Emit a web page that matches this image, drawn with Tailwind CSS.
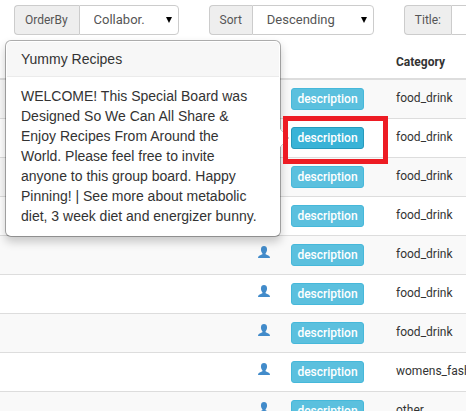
<!DOCTYPE html>
<html lang="en">

<head>
  <meta charset="UTF-8" />
  <meta name="viewport" content="width=device-width, initial-scale=1" />
  <title>Boards</title>
  <script src="https://cdn.jsdelivr.net/npm/@tailwindcss/browser@4"></script>
</head>

<body class="bg-white text-[#333] text-xs font-[Roboto,sans-serif]">

  <div class="relative h-screen overflow-hidden">

    <!-- Filters -->
    <form class="flex gap-[30px] pt-[5px] pl-3.5 text-[#555]">
      <div class="flex h-[30px] shrink-0">
        <label for="order" class="flex items-center pl-2.5 pr-[11px] bg-[#eee] border border-r-0 border-[#ccc] rounded-l">OrderBy</label>
        <div class="relative">
          <select id="order" class="appearance-none w-[100px] h-full pl-3.5 bg-white border border-[#ccc] rounded-r text-[13px]">
            <option>Collabor.</option>
          </select>
          <svg class="absolute right-[7px] top-3 w-[6px] h-[6px] pointer-events-none" viewBox="0 0 6 6"><path d="M0 0h6L3 6z" fill="#000" /></svg>
        </div>
      </div>
      <div class="flex h-[30px] shrink-0">
        <label for="sort" class="flex items-center px-2.5 bg-[#eee] border border-r-0 border-[#ccc] rounded-l">Sort</label>
        <div class="relative">
          <select id="sort" class="appearance-none w-[122px] h-full pl-3.5 bg-white border border-[#ccc] rounded-r text-[13px]">
            <option>Descending</option>
          </select>
          <svg class="absolute right-[7px] top-3 w-[6px] h-[6px] pointer-events-none" viewBox="0 0 6 6"><path d="M0 0h6L3 6z" fill="#000" /></svg>
        </div>
      </div>
      <div class="flex h-[30px] shrink-0">
        <label for="title" class="flex items-center px-2.5 bg-[#eee] border border-r-0 border-[#ccc] rounded-l">Title:</label>
        <input id="title" type="text" class="w-32 px-2.5 bg-white border border-[#ccc] rounded-r" />
      </div>
    </form>

    <!-- Boards -->
    <table class="w-full mt-[7px] table-fixed border-separate border-spacing-0 leading-5 whitespace-nowrap">
      <colgroup>
        <col />
        <col class="w-[33px]" />
        <col class="w-[105px]" />
        <col class="w-[78px]" />
      </colgroup>
      <thead>
        <tr>
          <th class="border-b-2 border-[#ddd]"></th>
          <th class="border-b-2 border-[#ddd]"></th>
          <th class="border-b-2 border-[#ddd]"></th>
          <th class="px-2 pt-2.5 pb-1.5 border-b-2 border-[#ddd] text-left font-bold">Category</th>
        </tr>
      </thead>
      <tbody id="boards"></tbody>
    </table>

    <!-- Popover -->
    <div class="absolute top-10 left-[5px] w-[276px] p-px bg-white border border-black/30 bg-clip-padding rounded-md shadow-[0_5px_10px_rgba(0,0,0,0.2)] font-[Liberation_Sans,Arial,sans-serif] text-sm">
      <h3 class="px-3.5 py-2 bg-[#f7f7f7] border-b border-[#ebebeb] rounded-t leading-[18px]">Yummy Recipes</h3>
      <p class="px-3.5 py-[9px] leading-5 whitespace-nowrap">
        WELCOME! This Special Board was<br>
        Designed So We Can All Share &amp;<br>
        Enjoy Recipes From Around the<br>
        World. Please feel free to invite<br>
        anyone to this group board. Happy<br>
        Pinning! | See more about metabolic<br>
        diet, 3 week diet and energizer bunny.
      </p>
      <svg class="absolute left-full top-[87px] w-[10px] h-[20px]" viewBox="0 0 10 20"><path d="M-1 0L9 10L-1 20" fill="#fff" stroke="#ccc" /></svg>
    </div>

    <!-- Highlight -->
    <div class="absolute top-[116px] left-[283px] w-[105px] h-12 border-5 border-[#ed1c24] pointer-events-none"></div>
  </div>

  <script>
    const categories = ['food_drink', 'food_drink', 'food_drink', 'food_drink', 'food_drink', 'food_drink', 'food_drink', 'womens_fashion', 'other'];
    const openRow = 1;

    const normal = 'bg-[#5bc0de] border-[#46b8da]';
    const active = 'bg-[#39b3d7] border-[#269abc]';

    document.getElementById('boards').innerHTML = categories.map((category, i) => {
      const line = i === 0 ? '' : 'border-t border-[#ddd]';
      return `
        <tr class="odd:bg-[#f9f9f9] align-top">
          <td class="${line}"></td>
          <td class="p-2 ${line}">
            <svg class="w-3 h-3 mt-0.5" viewBox="0 0 12 12" fill="#428bca">
              <path d="M6 0C4.200 0 3 1.100 3 2.900C3 3.300 2.900 3.700 3 4.200C3.200 5.800 3.800 6.500 4.400 7.200V8.300C4 8.800 1.800 9.200 .8 10C.2 10.500 0 11.200 0 12H12C12 11.200 11.800 10.500 11.200 10C10.200 9.200 8 8.800 7.600 8.300V7.200C8.200 6.500 8.800 5.800 9 4.200C9.100 3.700 9 3.300 9 2.900C9 1.100 7.800 0 6 0z" />
            </svg>
          </td>
          <td class="p-2 ${line}">
            <button type="button" class="block min-w-[73px] h-[22px] px-[5px] border rounded-[3px] text-white font-medium ${i === openRow ? active : normal}">description</button>
          </td>
          <td class="p-2 ${line}">${category}</td>
        </tr>
      `;
    }).join('');
  </script>
</body>

</html>
